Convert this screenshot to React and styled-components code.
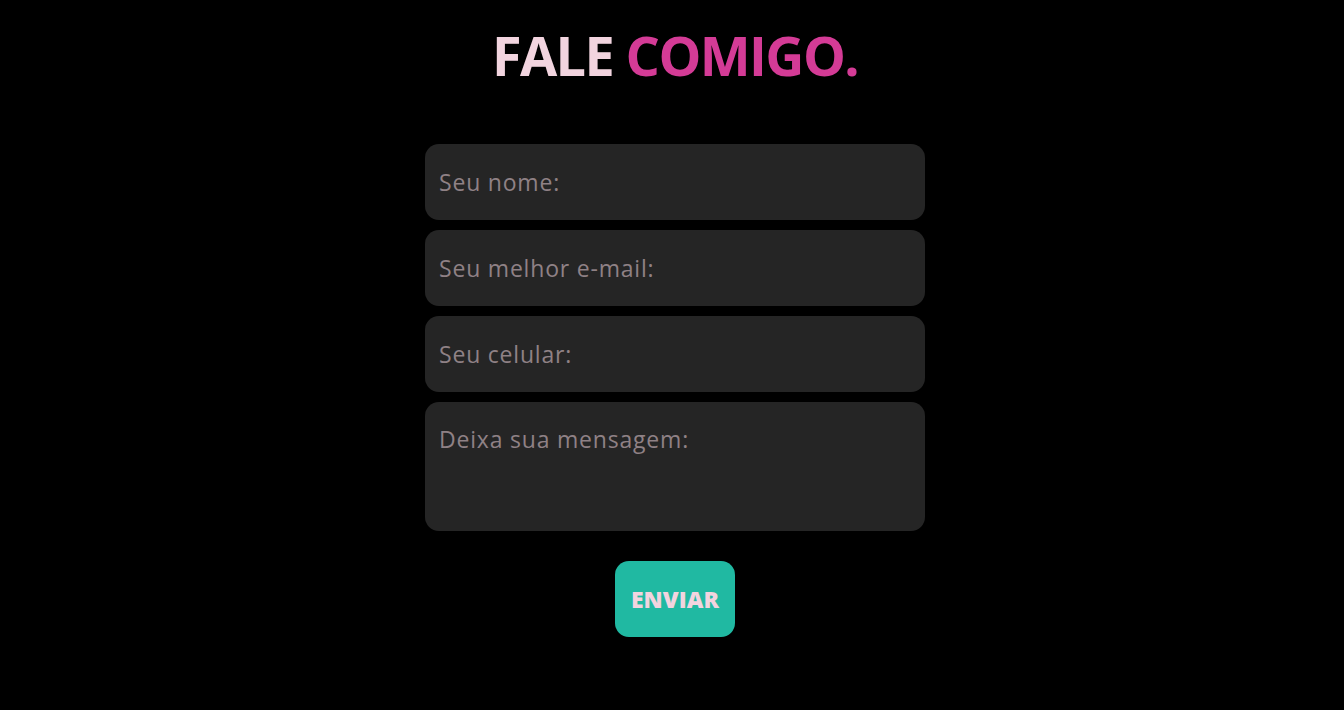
import styled, { createGlobalStyle } from "styled-components";

const GlobalStyle = createGlobalStyle`
  html, body {
    margin: 0;
    background: #000;
  }
  * {
    box-sizing: border-box;
  }
`;

const Page = styled.section`
  min-height: 710px;
  background: #000;
  display: flex;
  flex-direction: column;
  align-items: center;
  padding: 22px 0 0 6px;
  font-family: "Open Sans", "Noto Sans", sans-serif;
`;

const Title = styled.h1`
  margin: 0;
  font-family: "Open Sans", sans-serif;
  font-weight: 700;
  font-size: 54px;
  line-height: 66px;
  letter-spacing: -1.6px;
  color: #f2d4df;
`;

const Accent = styled.span`
  color: #d43b96;
`;

const Form = styled.form`
  width: 500px;
  margin-top: 56px;
  display: flex;
  flex-direction: column;
  align-items: center;
  gap: 10px;
`;

const fieldStyle = `
  width: 100%;
  border: none;
  outline: none;
  border-radius: 14px;
  background: #252525;
  color: #f2d4df;
  font-family: "Open Sans", sans-serif;
  font-size: 23px;
  letter-spacing: 0.8px;
  padding: 0 14px;
  &::placeholder {
    color: #8f8185;
  }
`;

const Input = styled.input`
  ${fieldStyle}
  height: 76px;
`;

const Message = styled.textarea`
  ${fieldStyle}
  height: 129px;
  padding-top: 21px;
  resize: none;
  line-height: 32px;
`;

const SendButton = styled.button`
  margin-top: 20px;
  width: 120px;
  height: 76px;
  padding: 0;
  border: none;
  border-radius: 14px;
  background: #20b9a2;
  color: #f2d4df;
  font-family: "Open Sans", sans-serif;
  font-weight: 800;
  font-size: 23px;
  line-height: 74px;
  cursor: pointer;
`;

export default function App() {
  return (
    <>
      <GlobalStyle />
      <Page>
        <Title>
          FALE <Accent>COMIGO.</Accent>
        </Title>
        <Form onSubmit={(e) => e.preventDefault()}>
          <Input type="text" placeholder="Seu nome:" />
          <Input type="email" placeholder="Seu melhor e-mail:" />
          <Input type="tel" placeholder="Seu celular:" />
          <Message placeholder="Deixa sua mensagem:" />
          <SendButton type="submit">ENVIAR</SendButton>
        </Form>
      </Page>
    </>
  );
}
